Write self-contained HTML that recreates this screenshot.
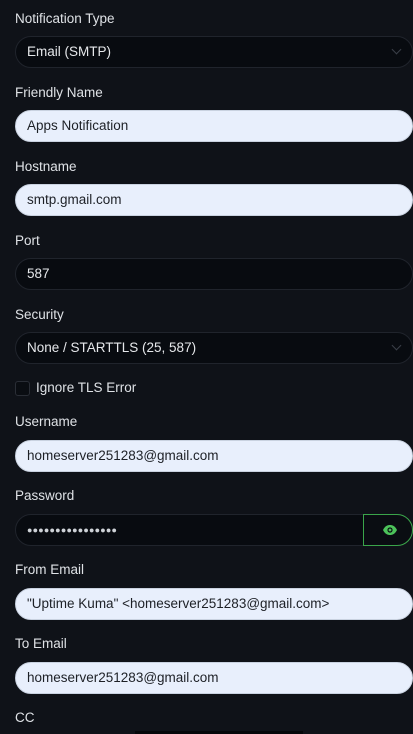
<!DOCTYPE html>
<html><head><style>
body{margin:0;width:413px;height:734px;overflow:hidden;background:#0f1218;font-family:"Liberation Sans",sans-serif;color:#e3e6ea;position:relative}
.l{position:absolute;left:15px;font-size:13.5px;color:#dfe2e6}
.i{position:absolute;left:15px;width:398px;height:32px;border-radius:16px;box-sizing:border-box;font-size:13.5px;line-height:30px;padding-left:11px}
.d{background:#080b10;border:1px solid #20242c;color:#e6e8eb}
.w{background:#e8effc;color:#1d2026;border:1px solid #c9d2e0}
.chev{position:absolute;left:393px;width:6px;height:6px;border-right:1.2px solid #3a3f48;border-bottom:1.2px solid #3a3f48;transform:rotate(45deg)}
</style></head><body>
<div class="l" style="top:11px">Notification Type</div>
<div class="i d" style="top:36px">Email (SMTP)</div><div class="chev" style="top:46px"></div>
<div class="l" style="top:85px">Friendly Name</div>
<div class="i w" style="top:110px">Apps Notification</div>
<div class="l" style="top:159px">Hostname</div>
<div class="i w" style="top:184px">smtp.gmail.com</div>
<div class="l" style="top:233px">Port</div>
<div class="i d" style="top:258px">587</div>
<div class="l" style="top:307px">Security</div>
<div class="i d" style="top:332px">None / STARTTLS (25, 587)</div><div class="chev" style="top:342px"></div>
<div style="position:absolute;left:15px;top:381px;width:13px;height:13px;border:1px solid #2a2e36;border-radius:3px;background:#0a0d12"></div>
<div class="l" style="top:380px;left:36px">Ignore TLS Error</div>
<div class="l" style="top:414px">Username</div>
<div class="i w" style="top:440px">homeserver251283@gmail.com</div>
<div class="l" style="top:488px">Password</div>
<div class="i d" style="top:514px;font-size:9px;letter-spacing:0.2px;color:#cfd3d8">●●●●●●●●●●●●●●●●</div>
<div style="position:absolute;left:363px;top:514px;width:50px;height:32px;box-sizing:border-box;border:1px solid #3aa54a;border-radius:0 16px 16px 0;background:#0a0d12"></div>
<svg style="position:absolute;left:382px;top:523px" width="16" height="14" viewBox="0 0 16 14"><path d="M1 7C3 3 5.5 2 8 2s5 1 7 5c-2 4-4.5 5-7 5S3 11 1 7z" fill="#4cc35a"/><circle cx="8" cy="7" r="2.6" fill="#0a0d12"/><circle cx="8" cy="7" r="1.4" fill="#4cc35a"/></svg>
<div class="l" style="top:562px">From Email</div>
<div class="i w" style="top:588px">"Uptime Kuma" &lt;homeserver251283@gmail.com&gt;</div>
<div class="l" style="top:636px">To Email</div>
<div class="i w" style="top:662px">homeserver251283@gmail.com</div>
<div class="l" style="top:710px">CC</div>
<div style="position:absolute;left:135px;top:731px;width:168px;height:3px;background:#05070a"></div>
</body></html>
